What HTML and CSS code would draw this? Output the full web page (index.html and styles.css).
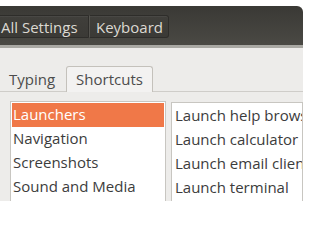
FILE: index.html
```html
<!DOCTYPE html>
<html>
<head>
<meta charset="utf-8">
<link rel="stylesheet" href="styles.css">
</head>
<body>
<div class="window">
  <header class="headerbar">
    <div class="btn-group">
      <span class="btn btn-first">All Settings</span>
      <span class="btn">Keyboard</span>
    </div>
  </header>
  <div class="content">
    <div class="tabs">
      <span class="tab">Typing</span>
      <span class="tab active">Shortcuts</span>
    </div>
    <div class="page">
      <ul class="list cats">
        <li class="sel">Launchers</li>
        <li>Navigation</li>
        <li>Screenshots</li>
        <li>Sound and Media</li>
      </ul>
      <ul class="list items">
        <li>Launch help browser</li>
        <li>Launch calculator</li>
        <li>Launch email client</li>
        <li>Launch terminal</li>
      </ul>
    </div>
  </div>
</div>
</body>
</html>
```
FILE: styles.css
```css
html, body {
  margin: 0;
  padding: 0;
  background: #ffffff;
  overflow: hidden;
}
body {
  width: 308px;
  height: 201px;
  font-family: "Open Sans", "Noto Sans", sans-serif;
  font-size: 15px;
}
.window {
  margin-top: 6px;
  width: 303px;
  height: 195px;
  overflow: hidden;
  border-top-right-radius: 6px;
  background: #edecea;
}
.headerbar {
  height: 39px;
  background: linear-gradient(#3a3935, #4a4944);
  border-bottom: 3px solid #a9a8a3;
  display: flex;
  align-items: center;
}
.btn-group {
  display: flex;
  margin-left: -3px;
  margin-top: 2px;
}
.btn {
  height: 23px;
  line-height: 22px;
  color: #dcd9d2;
  background: linear-gradient(#403f3b, #3b3a36);
  border: 1px solid #2e2d2a;
  border-radius: 3px;
  box-shadow: inset 0 1px 0 rgba(255,255,255,0.05);
  white-space: nowrap;
  overflow: hidden;
}
.btn-first {
  border-top-right-radius: 0;
  border-bottom-right-radius: 0;
  width: 92px;
  padding-left: 3px;
  box-sizing: border-box;
}
.btn-first + .btn {
  border-top-left-radius: 0;
  border-bottom-left-radius: 0;
  border-left-color: #55544f;
  width: 80px;
  padding-left: 6px;
  box-sizing: border-box;
}
.content {
  padding-top: 16px;
}
.tabs {
  display: flex;
  align-items: flex-end;
  height: 27px;
  border-bottom: 1px solid #cfcdc9;
}
.tab {
  height: 24px;
  line-height: 24px;
  padding: 0 10px 0 8px;
  color: #4c4c4c;
  border: 1px solid transparent;
  border-bottom: none;
  white-space: nowrap;
}
.tab.active {
  height: 25px;
  background: #f3f2f1;
  border-color: #c4c1bb;
  border-radius: 3px 3px 0 0;
  padding: 0 9px 0 9px;
  margin-bottom: -1px;
}
.page {
  display: flex;
  gap: 5px;
  padding: 9px 0 0 10px;
}
.list {
  list-style: none;
  margin: 0;
  padding: 1px;
  background: #ffffff;
  border: 1px solid #c8c6c1;
  color: #3c3c3c;
}
.cats {
  width: 152px;
  flex: none;
}
.items {
  flex: 1;
  margin-top: 1px;
  white-space: nowrap;
  overflow: hidden;
}
.list li {
  height: 24px;
  line-height: 23px;
  padding-left: 1px;
  white-space: nowrap;
}
.items li {
  padding-left: 2px;
}
.list li.sel {
  background: #f07848;
  color: #ffffff;
}
```
